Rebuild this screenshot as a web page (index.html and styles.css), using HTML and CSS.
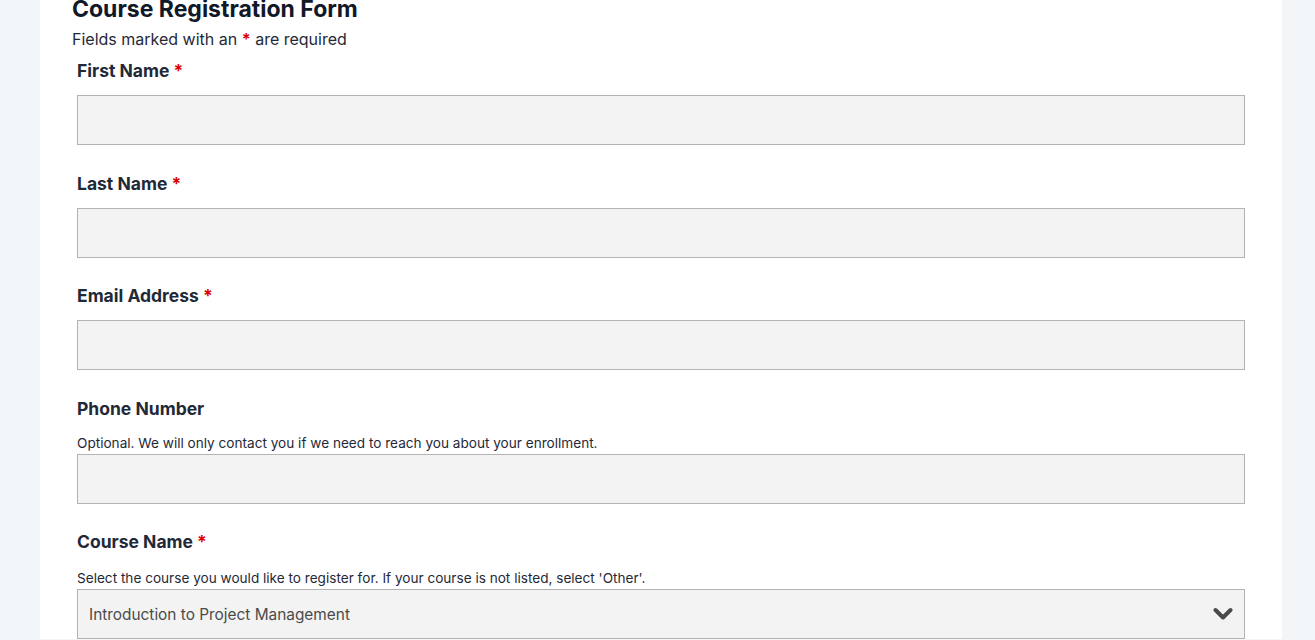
FILE: index.html
```html
<!DOCTYPE html>
<html lang="en">
<head>
<meta charset="utf-8">
<title>Course Registration Form</title>
<link rel="stylesheet" href="styles.css">
</head>
<body>
<main class="page">
  <form class="card">
    <h1 class="title">Course Registration Form</h1>
    <p class="intro">Fields marked with an <span class="req">*</span> are required</p>
    <div class="fields">
      <div class="field">
        <label class="label" for="fn">First Name <span class="req">*</span></label>
        <input class="control" id="fn" type="text">
      </div>
      <div class="field">
        <label class="label" for="ln">Last Name <span class="req">*</span></label>
        <input class="control" id="ln" type="text">
      </div>
      <div class="field">
        <label class="label" for="em">Email Address <span class="req">*</span></label>
        <input class="control" id="em" type="email">
      </div>
      <div class="field">
        <label class="label" for="ph">Phone Number</label>
        <p class="help">Optional. We will only contact you if we need to reach you about your enrollment.</p>
        <input class="control" id="ph" type="tel">
      </div>
      <div class="field field--select">
        <label class="label" for="cn">Course Name <span class="req">*</span></label>
        <p class="help">Select the course you would like to register for. If your course is not listed, select 'Other'.</p>
        <div class="select">
          <span class="select-value">Introduction to Project Management</span>
          <svg class="chevron" width="20" height="14" viewBox="0 0 20 14"><polyline points="2.5,3 10,10.5 17.5,3" fill="none" stroke="#4a4a4a" stroke-width="4" stroke-linecap="round" stroke-linejoin="round"/></svg>
        </div>
      </div>
    </div>
  </form>
</main>
</body>
</html>
```

FILE: styles.css
```css
html, body {
  margin: 0;
  padding: 0;
  background: #f3f6f9;
  height: 100%;
  overflow: hidden;
}

body {
  font-family: Inter, "Liberation Sans", sans-serif;
  color: #1d2433;
}

.page {
  padding: 0 33px 0 40px;
}

.card {
  background: #ffffff;
  padding: 0 37px 0 32px;
  min-height: 640px;
}

.title {
  margin: -5px 0 0 0;
  font-size: 23px;
  line-height: 28px;
  font-weight: 700;
  color: #111827;
}

.intro {
  margin: 4px 0 0 0;
  font-size: 16px;
  line-height: 24px;
  color: #1f2937;
}

.req {
  color: #dd0000;
  font-weight: 700;
}

.fields {
  margin-top: 9px;
  padding-left: 5px;
  display: flex;
  flex-direction: column;
  gap: 28px;
}

.field {
  display: flex;
  flex-direction: column;
}

.label {
  font-size: 17.5px;
  line-height: 22px;
  font-weight: 700;
  color: #1f2937;
  margin-bottom: 13px;
}

.field + .field .label {
  margin-top: -0.5px;
}

.help {
  margin: 1px 0 2px 0;
  font-size: 13.6px;
  line-height: 18px;
  color: #1f2937;
}

.field--select .help {
  margin-top: 3px;
}

.control {
  box-sizing: border-box;
  height: 50px;
  width: 100%;
  margin: 0;
  background: #f3f3f3;
  border: 1px solid #b3b3b3;
  border-radius: 0;
  font: inherit;
}

.select {
  box-sizing: border-box;
  height: 50px;
  background: #f3f3f3;
  border: 1px solid #b3b3b3;
  display: flex;
  align-items: center;
  justify-content: space-between;
  padding: 0 11px 0 11px;
}

.select-value {
  font-size: 15.4px;
  color: #4b4b4b;
}

.chevron {
  display: block;
}
```
